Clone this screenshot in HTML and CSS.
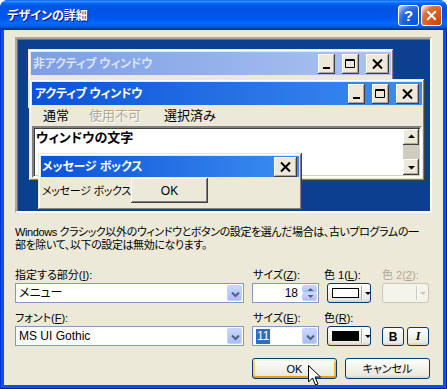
FILE: index.html
```html
<!DOCTYPE html>
<html lang="ja">
<head>
<meta charset="utf-8">
<title>デザインの詳細</title>
<link rel="stylesheet" href="styles.css">
</head>
<body>
<div class="win">
  <div class="titlebar">
    <span class="title">デザインの詳細</span>
    <div class="tbtns">
      <span class="tb help">?</span>
      <span class="tb close"><svg width="13" height="13" viewBox="0 0 13 13"><path d="M3 3 L10 10 M10 3 L3 10" stroke="#fff" stroke-width="2" stroke-linecap="square"/></svg></span>
    </div>
  </div>
  <div class="frame">
    <div class="client">
      <div class="preview">
        <div class="pwin inactive">
          <div class="cap cap-off">
            <span class="cap-text">非アクティブ ウィンドウ</span>
            <span class="cbtn"><svg width="17" height="20" viewBox="0 0 17 20"><rect x="5" y="13" width="7" height="2" fill="#000"/></svg></span>
            <span class="cbtn"><svg width="17" height="20" viewBox="0 0 17 20"><path d="M3.5 5.5 H12.5 V13.5 H3.5 Z M3.5 6.5 H12.5" fill="none" stroke="#000"/></svg></span>
            <span class="cbtn wide"><svg width="23" height="20" viewBox="0 0 23 20"><path d="M7 5.5 L16 14.5 M16 5.5 L7 14.5" stroke="#000" stroke-width="2"/></svg></span>
          </div>
        </div>
        <div class="pwin active">
          <div class="cap cap-on">
            <span class="cap-text">アクティブ ウィンドウ</span>
            <span class="cbtn"><svg width="17" height="20" viewBox="0 0 17 20"><rect x="5" y="13" width="7" height="2" fill="#000"/></svg></span>
            <span class="cbtn"><svg width="17" height="20" viewBox="0 0 17 20"><path d="M3.5 5.5 H12.5 V13.5 H3.5 Z M3.5 6.5 H12.5" fill="none" stroke="#000"/></svg></span>
            <span class="cbtn wide"><svg width="23" height="20" viewBox="0 0 23 20"><path d="M7 5.5 L16 14.5 M16 5.5 L7 14.5" stroke="#000" stroke-width="2"/></svg></span>
          </div>
          <div class="menubar">
            <span class="mi">通常</span>
            <span class="mi mdis">使用不可</span>
            <span class="mi msel">選択済み</span>
          </div>
          <div class="textarea">
            <div class="wtext">ウィンドウの文字</div>
            <div class="vscroll">
              <span class="sbtn"><svg width="16" height="16" viewBox="0 0 16 16"><path d="M5 9 H12 L8.5 5.5 Z" fill="#000"/></svg></span>
              <span class="strack"></span>
              <span class="sbtn"><svg width="16" height="16" viewBox="0 0 16 16"><path d="M5 7 H12 L8.5 10.5 Z" fill="#000"/></svg></span>
            </div>
          </div>
        </div>
        <div class="pwin msg">
          <div class="cap cap-on cap-msg">
            <span class="cap-text">メッセージ ボックス</span>
            <span class="cbtn wide"><svg width="23" height="20" viewBox="0 0 23 20"><path d="M7 5.5 L16 14.5 M16 5.5 L7 14.5" stroke="#000" stroke-width="2"/></svg></span>
          </div>
          <div class="msgbody">
            <span class="msgtext">メッセージ ボックスの文字</span>
            <span class="okclassic">OK</span>
          </div>
        </div>
      </div>

      <p class="desc"><span class="line">Windows クラシック以外のウィンドウとボタンの設定を選んだ場合は、古いプログラムの一</span><span class="line">部を除いて、以下の設定は無効になります。</span></p>

      <div class="form">
        <span class="lbl">指定する部分(<u>I</u>):</span>
        <span class="lbl l2">サイズ(<u>Z</u>):</span>
        <span class="lbl">色 1(<u>L</u>):</span>
        <span class="lbl ldis">色 2(<u>2</u>):</span>

        <div class="combo wide-combo"><span class="val">メニュー</span><span class="drop"><svg width="15" height="16" viewBox="0 0 15 16"><path d="M4 6.5 L7.5 10 L11 6.5" fill="none" stroke="#4d6185" stroke-width="2"/></svg></span></div>
        <div class="combo spin"><span class="val num">18</span><span class="spinbtns"><span class="sb"><svg width="15" height="8" viewBox="0 0 15 8"><path d="M4.5 6 H10.5 L7.5 3 Z" fill="#4d6185"/></svg></span><span class="sb"><svg width="15" height="8" viewBox="0 0 15 8"><path d="M4.5 2 H10.5 L7.5 5 Z" fill="#4d6185"/></svg></span></span></div>
        <div class="colorbtn"><span class="swatch sw-white"></span><span class="sep"></span><span class="tri"></span></div>
        <div class="colorbtn cdis"><span class="swatch sw-none"></span><span class="sep"></span><span class="tri"></span></div>

        <span class="lbl lrow2">フォント(<u>F</u>):</span>
        <span class="lbl lrow2 l2">サイズ(<u>E</u>):</span>
        <span class="lbl lrow2">色(<u>R</u>):</span>
        <span class="lbl lrow2"></span>

        <div class="combo wide-combo"><span class="val">MS UI Gothic</span><span class="drop"><svg width="15" height="16" viewBox="0 0 15 16"><path d="M4 6.5 L7.5 10 L11 6.5" fill="none" stroke="#4d6185" stroke-width="2"/></svg></span></div>
        <div class="combo spin"><span class="val"><span class="selv">11</span></span><span class="drop"><svg width="15" height="16" viewBox="0 0 15 16"><path d="M4 6.5 L7.5 10 L11 6.5" fill="none" stroke="#4d6185" stroke-width="2"/></svg></span></div>
        <div class="colorbtn"><span class="swatch sw-black"></span><span class="sep"></span><span class="tri"></span></div>
        <div class="bi"><span class="xpbtn sq bold">B</span><span class="xpbtn sq ital">I</span></div>
      </div>

      <div class="actions">
        <span class="xpbtn act hot">OK</span>
        <span class="xpbtn act">キャンセル</span>
      </div>
    </div>
  </div>
  <svg class="cursor" width="13" height="21" viewBox="0 0 13 21"><path d="M0.5 0.5 V17 L4.5 13 L7.5 20 L10 19 L7 12 H12.5 Z" fill="#fff" stroke="#000"/></svg>
</div>
</body>
</html>
```

FILE: styles.css
```css
* { box-sizing: border-box; margin: 0; padding: 0; }
html, body { width: 447px; height: 389px; overflow: hidden; background: #fff; }
body {
  font-family: "Liberation Sans", "Noto Sans CJK JP", sans-serif;
  font-size: 11px;
  color: #000;
  font-feature-settings: "palt";
}
.win {
  position: relative;
  width: 447px;
  height: 389px;
  display: flex;
  flex-direction: column;
  border-radius: 8px 8px 0 0;
  overflow: hidden;
  background: #0054e3;
}
.titlebar {
  height: 30px;
  flex: none;
  display: flex;
  align-items: center;
  padding: 0 5px 0 7px;
  background: linear-gradient(180deg, #0058ee 0%, #3a93ff 4%, #288eff 6%, #127dff 8%, #036ffc 10%, #0262ee 14%, #0057e5 20%, #0054e3 24%, #0055eb 56%, #005bf5 66%, #026afe 76%, #0062ef 86%, #0052d6 92%, #0040ab 94%, #003092 100%);
}
.title {
  flex: 1;
  color: #fff;
  font-weight: bold;
  font-size: 12px;
  line-height: 16px;
  padding-top: 1px;
  text-shadow: 1px 1px #0f1089;
}
.tbtns { display: flex; gap: 2px; }
.tb {
  width: 21px;
  height: 21px;
  border: 1px solid #fff;
  border-radius: 3px;
  display: flex;
  align-items: center;
  justify-content: center;
  color: #fff;
  font-weight: bold;
  font-size: 15px;
  font-family: "Liberation Sans", sans-serif;
}
.help { background: radial-gradient(circle at 90% 90%, #0054e9 0%, #2263d5 55%, #4479e4 70%, #a3bbec 90%, #fff 100%); }
.close { background: radial-gradient(circle at 90% 90%, #cc4600 0%, #dc6527 55%, #cd7546 70%, #ffccb2 90%, #fff 100%); }

.frame {
  flex: 1;
  min-width: 0;
  display: flex;
  padding: 0 4px 4px 4px;
  background: #0055e5;
  box-shadow: inset 1px 0 #0831d9, inset -1px 0 #001ea0, inset 0 -1px #001ea0;
}
.client {
  flex: 1;
  min-width: 0;
  background: #ece9d8;
  padding: 7px 11px 0 11px;
  display: flex;
  flex-direction: column;
}

/* preview */
.preview {
  position: relative;
  flex: none;
  height: 176px;
  background: #0b3f8f;
  border: 2px solid;
  border-color: #aca899 #fff #fff #aca899;
  box-shadow: inset 1px 1px #716f64;
}
.pwin {
  position: absolute;
  background: #ece9d8;
  padding: 3px;
  display: flex;
  flex-direction: column;
  box-shadow: inset -1px -1px #404040, inset 1px 1px #ece9d8, inset -2px -2px #808080, inset 2px 2px #fff;
}
.inactive { left: 11px; top: 10px; width: 366px; height: 60px; }
.active { left: 12px; top: 40px; width: 396px; height: 102px; }
.msg { left: 21px; top: 114px; width: 264px; height: 57px; }

.cap {
  height: 23px;
  flex: none;
  display: flex;
  align-items: center;
  padding: 0 2px 0 2px;
}
.cap-off { background: linear-gradient(90deg, #7e9de4, #abc4f2); color: #d8e4f8; }
.cap-on { background: linear-gradient(90deg, #0a53d6, #3d8ef2); color: #fff; }
.cap-msg { height: 21px; padding-left: 1px; padding-right: 2px; }
.cap-text {
  flex: 1;
  font-weight: bold;
  font-size: 12px;
  letter-spacing: -0.2px;
  line-height: 16px;
  white-space: nowrap;
}
.active .cap-text { padding-left: 1px; }
.active .cap { padding-right: 3px; }
.cbtn {
  width: 17px;
  height: 20px;
  margin-left: 7px;
  background: #ece9d8;
  box-shadow: inset -1px -1px #404040, inset 1px 1px #fff, inset -2px -2px #aca899;
  display: block;
}
.cbtn svg { display: block; }
.cbtn.wide { width: 23px; }

.menubar {
  height: 21px;
  flex: none;
  display: flex;
  align-items: center;
  font-size: 13px;
  line-height: 16px;
}
.mi { padding: 0 10px; white-space: nowrap; }
.mi:first-child { padding-left: 11px; }
.mdis { color: #aca899; text-shadow: 1px 1px #fff; }
.msel { margin-left: 3px; }

.textarea {
  flex: 1;
  display: flex;
  background: #fff;
  border: 2px solid;
  border-color: #808080 #fff #fff #808080;
  box-shadow: inset 1px 1px #404040, inset -1px -1px #d4d0c8;
  padding: 1px 1px 1px 2px;
}
.wtext {
  flex: 1;
  font-weight: bold;
  font-size: 13px;
  line-height: 15px;
  padding-top: 1px;
  white-space: nowrap;
}
.vscroll {
  width: 16px;
  display: flex;
  flex-direction: column;
}
.sbtn {
  height: 16px;
  flex: none;
  background: #ece9d8;
  box-shadow: inset -1px -1px #404040, inset 1px 1px #fff, inset -2px -2px #aca899;
}
.sbtn svg { display: block; }
.strack { flex: 1; background: #d0ccc0; }

.msgbody {
  flex: 1;
  display: flex;
  align-items: flex-start;
  padding-left: 1px;
}
.msgtext {
  width: 89px;
  overflow: hidden;
  white-space: nowrap;
  line-height: 14px;
  margin-top: 7px;
  font-size: 11px;
  letter-spacing: -0.3px;
}
.okclassic {
  margin-top: 1px;
  width: 77px;
  height: 25px;
  display: flex;
  align-items: center;
  justify-content: center;
  font-size: 12px;
  background: #ece9d8;
  box-shadow: inset -1px -1px #404040, inset 1px 1px #fff, inset -2px -2px #808080;
}

/* description */
.desc {
  margin-top: 13px;
  line-height: 13px;
  font-size: 11px;
  letter-spacing: -0.4px;
  overflow: hidden;
}
.line { display: block; white-space: nowrap; }

/* form */
.form {
  margin-top: 17px;
  display: grid;
  grid-template-columns: 237px 72px 58px 50px;
  grid-template-rows: 14px 20px 23px 20px;
}
.lbl {
  line-height: 13px;
  white-space: nowrap;
  align-self: start;
}
.lrow2 { align-self: end; padding-bottom: 1px; }
.ldis { color: #aca899; }
.l2 { padding-left: 1px; }

.combo {
  height: 20px;
  border: 1px solid #7f9db9;
  background: #fff;
  display: flex;
  align-items: stretch;
  padding: 1px;
  font-size: 12px;
}
.wide-combo { width: 229px; }
.spin { width: 67px; }
.val {
  flex: 1;
  display: flex;
  align-items: center;
  padding-left: 2px;
  white-space: nowrap;
  line-height: 14px;
}
.num { justify-content: flex-end; padding-right: 4px; }
.selv { background: #316ac5; color: #fff; padding: 0 1px; line-height: 15px; }
.drop {
  width: 15px;
  border: 1px solid #c3d3fd;
  border-radius: 2px;
  background: linear-gradient(180deg, #c9d8fc 0%, #b8cbf7 55%, #a8bdf3 100%);
}
.drop svg { display: block; }
.spinbtns { width: 15px; display: flex; flex-direction: column; gap: 0; }
.sb {
  flex: 1;
  border: 1px solid #c3d3fd;
  border-radius: 2px;
  background: linear-gradient(180deg, #c9d8fc 0%, #b8cbf7 55%, #a8bdf3 100%);
  overflow: hidden;
}
.sb svg { display: block; margin-top: -1px; }

.colorbtn {
  margin-left: 3px;
  width: 44px;
  height: 20px;
  border: 1px solid #003c74;
  border-radius: 3px;
  background: linear-gradient(180deg, #fff 0%, #f5f4ef 40%, #ebe9e0 85%, #d6d0c5 100%);
  display: flex;
  align-items: center;
  padding-left: 4px;
}
.swatch { width: 27px; height: 10px; border: 1px solid #000; flex: none; }
.sw-white { background: #fff; }
.sw-black { background: #000; }
.sw-none { border-color: transparent; background: transparent; }
.sep {
  width: 2px;
  height: 14px;
  margin: 0 2px 0 2px;
  border-left: 1px solid #aca899;
  border-right: 1px solid #fff;
}
.tri {
  width: 0;
  height: 0;
  border-left: 3px solid transparent;
  border-right: 3px solid transparent;
  border-top: 3px solid #000;
}
.cdis {
  margin-left: 0;
  width: 47px;
  border-color: #c9c7ba;
  background: #f5f4ea;
}
.cdis .tri { border-top-color: #c9c7ba; }
.cdis .sep { border-left-color: #c9c7ba; }

.bi { display: flex; gap: 3px; }
.xpbtn {
  border: 1px solid #003c74;
  border-radius: 3px;
  background: linear-gradient(180deg, #fff 0%, #f5f4ef 40%, #ebe9e0 85%, #d6d0c5 100%);
  display: flex;
  align-items: center;
  justify-content: center;
  white-space: nowrap;
}
.sq { width: 22px; height: 19px; margin-top: 1px; }
.bold { font-weight: bold; font-size: 12px; font-family: "Liberation Sans", sans-serif; }
.ital { font-style: italic; font-weight: bold; font-size: 12px; font-family: "Liberation Serif", serif; }

.actions {
  margin-top: 12px;
  display: flex;
  justify-content: flex-end;
  gap: 8px;
  padding-right: 2px;
}
.act { width: 85px; height: 21px; line-height: 14px; font-size: 11px; }
.hot {
  box-shadow: inset 0 2px #fff0cf, inset 0 -2px #e5a01a, inset 2px 0 #fbd06b, inset -2px 0 #f5b43a;
}
.cursor { position: absolute; left: 308px; top: 365px; }
```
